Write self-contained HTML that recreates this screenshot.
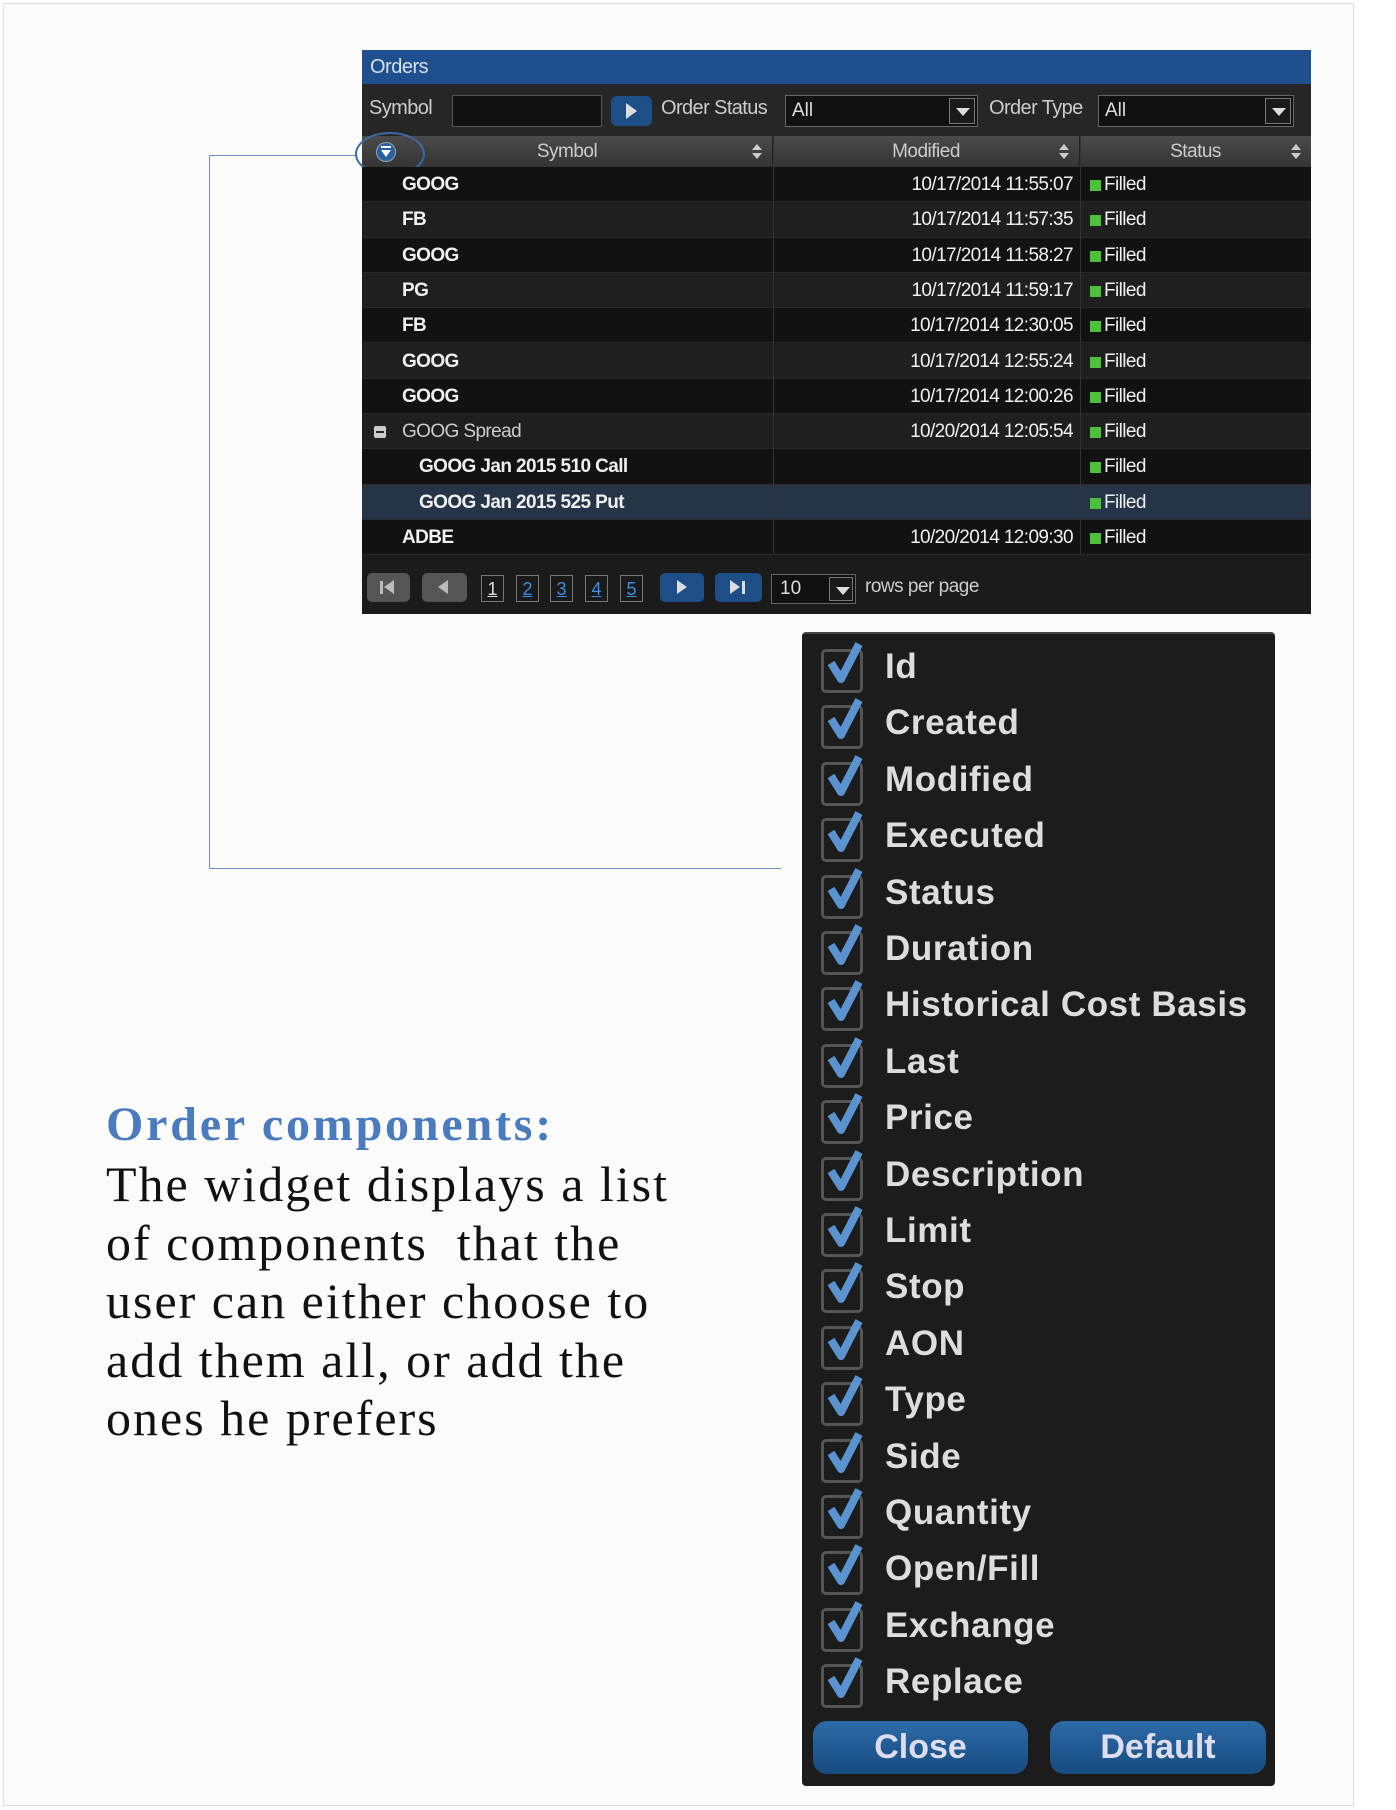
<!DOCTYPE html>
<html><head><meta charset="utf-8"><style>
*{margin:0;padding:0;box-sizing:border-box}
body{width:1396px;height:1810px;background:#fff;position:relative;overflow:hidden;font-family:"Liberation Sans",sans-serif}
.frame{position:absolute;left:3px;top:3px;width:1351px;height:1803px;border:1.5px solid #ddd;background:#fbfbfc}
.abs{position:absolute}
.panel{left:362px;top:50px;width:949px;height:564px;background:#1b1b1b}
.title{left:0;top:0;width:949px;height:34px;background:#1e4f8f;color:#d8e0ea;font-size:20px;line-height:34px;padding-left:8px;letter-spacing:-.5px}
.frow{left:0;top:34px;width:949px;height:52px;background:#262626}
.lbl{color:#ccc;font-size:20px;letter-spacing:-.6px;top:13px}
.inp{background:#111;border:1px solid #555;height:32px;top:11px}
.sel{background:#111;border:1px solid #666;height:32px;top:11px;color:#ddd;font-size:19px;padding:4px 6px}
.dd{position:absolute;right:2px;top:2px;width:26px;height:26px;background:#1a1a1a;border:1px solid #777}
.dd:after{content:"";position:absolute;left:6px;top:9px;border-left:7px solid transparent;border-right:7px solid transparent;border-top:8px solid #ddd}
.btn{background:#1d4f86;border-radius:6px}
.hdr{left:0;top:86px;width:949px;height:31px;background:linear-gradient(#4a4a4a,#353535);color:#ccc;font-size:19px;letter-spacing:-.5px}
.hc{position:absolute;top:0;height:31px;line-height:31px;text-align:center;border-right:1px solid #222}
.srt{position:absolute;right:10px;top:8px;width:10px;height:16px}
.srt:before{content:"";position:absolute;left:0;top:0;border-left:5px solid transparent;border-right:5px solid transparent;border-bottom:6px solid #ccc}
.srt:after{content:"";position:absolute;left:0;top:9px;border-left:5px solid transparent;border-right:5px solid transparent;border-top:6px solid #ccc}
.row{position:absolute;left:0;width:949px;height:35.3px;color:#f0f0f0;font-size:19px;letter-spacing:-.6px;line-height:35px;font-weight:bold;border-bottom:1px solid #2a2a2a}
.row span{position:absolute}
.c1{left:40px}.c2{right:238px;font-weight:normal}.c3{left:728px;font-weight:normal}
.g{display:inline-block;width:11px;height:11px;background:#4cc23c;margin-right:3px;vertical-align:-1px}
.vl{position:absolute;top:86px;width:1px;height:478px;background:#333}
.pb{position:absolute;top:523px;height:29px;border-radius:5px}
.pn{position:absolute;top:525px;width:23px;height:27px;border:1px solid #777;color:#3d8fe6;font-size:18px;text-align:center;line-height:26px;text-decoration:underline;background:#1a1a1a}
.cc{left:802px;top:632px;width:473px;height:1154px;background:#1c1c1c;border-radius:4px;border-top:2px solid #444}
.it{position:absolute;left:19px;height:50px}
.cb{position:absolute;left:0;top:2px;width:42px;height:44px;border:3px solid #555;border-radius:5px}
.it span{position:absolute;left:64px;top:0px;color:#ddd;font-size:35px;font-weight:bold;white-space:nowrap;letter-spacing:.6px}
.bb{position:absolute;top:1087px;height:53px;border-radius:14px;background:linear-gradient(#2c6aa8,#174b80);color:#dde;font-size:34px;font-weight:bold;text-align:center;line-height:52px}
.tx{font-family:"Liberation Serif",serif}
</style></head><body>
<div class="frame"></div>

<div class="abs" style="left:209px;top:155px;width:1px;height:713px;background:#6b8fc0"></div>
<div class="abs" style="left:209px;top:155px;width:146px;height:1px;background:#6b8fc0"></div>
<div class="abs" style="left:209px;top:868px;width:572px;height:1px;background:#6b8fc0"></div>

<div class="abs panel">
  <div class="abs title">Orders</div>
  <div class="abs frow">
    <div class="abs lbl" style="left:7px">Symbol</div>
    <div class="abs inp" style="left:90px;width:150px"></div>
    <div class="abs btn" style="left:249px;top:12px;width:41px;height:30px"><div style="position:absolute;left:15px;top:7px;border-top:8px solid transparent;border-bottom:8px solid transparent;border-left:11px solid #ddd"></div></div>
    <div class="abs lbl" style="left:299px">Order Status</div>
    <div class="abs sel" style="left:423px;width:193px">All<div class="dd"></div></div>
    <div class="abs lbl" style="left:627px">Order Type</div>
    <div class="abs sel" style="left:736px;width:196px">All<div class="dd"></div></div>
  </div>
  <div class="abs hdr">
    <div class="hc" style="left:0;width:411px">Symbol<div class="srt"></div></div>
    <div class="hc" style="left:411px;width:307px">Modified<div class="srt"></div></div>
    <div class="hc" style="left:718px;width:231px;border:none">Status<div class="srt"></div></div>
    <div style="position:absolute;left:14px;top:6px;width:20px;height:20px;border-radius:50%;background:#2c5f9e;border:1px solid #8ab"><div style="position:absolute;left:4px;top:3px;width:10px;height:2px;background:#fff"></div><div style="position:absolute;left:4px;top:7px;border-left:5px solid transparent;border-right:5px solid transparent;border-top:7px solid #fff"></div></div>
  </div>
  <div class="abs" style="left:-7px;top:82px;width:70px;height:44px;border:2.5px solid #3b6aa8;border-radius:50%"></div>

  <div class="row" style="top:117px;background:#121212"><span class="c1">GOOG</span><span class="c2">10/17/2014 11:55:07</span><span class="c3"><i class="g"></i>Filled</span></div>
  <div class="row" style="top:152.3px;background:#1f1f1f"><span class="c1">FB</span><span class="c2">10/17/2014 11:57:35</span><span class="c3"><i class="g"></i>Filled</span></div>
  <div class="row" style="top:187.6px;background:#121212"><span class="c1">GOOG</span><span class="c2">10/17/2014 11:58:27</span><span class="c3"><i class="g"></i>Filled</span></div>
  <div class="row" style="top:222.9px;background:#1f1f1f"><span class="c1">PG</span><span class="c2">10/17/2014 11:59:17</span><span class="c3"><i class="g"></i>Filled</span></div>
  <div class="row" style="top:258.2px;background:#121212"><span class="c1">FB</span><span class="c2">10/17/2014 12:30:05</span><span class="c3"><i class="g"></i>Filled</span></div>
  <div class="row" style="top:293.5px;background:#1f1f1f"><span class="c1">GOOG</span><span class="c2">10/17/2014 12:55:24</span><span class="c3"><i class="g"></i>Filled</span></div>
  <div class="row" style="top:328.8px;background:#121212"><span class="c1">GOOG</span><span class="c2">10/17/2014 12:00:26</span><span class="c3"><i class="g"></i>Filled</span></div>
  <div class="row" style="top:364.1px;background:#1f1f1f"><span style="left:12px;top:12px;width:12px;height:12px;background:#ccc;border-radius:2px"><span style="left:2px;top:5px;width:8px;height:2px;background:#222"></span></span><span class="c1" style="font-weight:normal;color:#ccc">GOOG Spread</span><span class="c2">10/20/2014 12:05:54</span><span class="c3"><i class="g"></i>Filled</span></div>
  <div class="row" style="top:399.4px;background:#121212"><span style="left:57px">GOOG Jan 2015 510 Call</span><span class="c3"><i class="g"></i>Filled</span></div>
  <div class="row" style="top:434.7px;background:#263447"><span style="left:57px">GOOG Jan 2015 525 Put</span><span class="c3"><i class="g"></i>Filled</span></div>
  <div class="row" style="top:470px;background:#121212"><span class="c1">ADBE</span><span class="c2">10/20/2014 12:09:30</span><span class="c3"><i class="g"></i>Filled</span></div>
  <div class="vl" style="left:411px"></div><div class="vl" style="left:718px"></div>
  <div class="abs" style="left:0;top:505px;width:949px;height:59px;background:#1b1b1b"></div>

  <div class="pb" style="left:5px;width:43px;background:#555"><div style="position:absolute;left:13px;top:8px;width:3px;height:13px;background:#bbb"></div><div style="position:absolute;left:17px;top:7px;border-top:7px solid transparent;border-bottom:7px solid transparent;border-right:10px solid #bbb"></div></div>
  <div class="pb" style="left:60px;width:45px;background:#555"><div style="position:absolute;left:16px;top:7px;border-top:7px solid transparent;border-bottom:7px solid transparent;border-right:10px solid #bbb"></div></div>
  <div class="pn" style="left:119px;color:#ddd">1</div>
  <div class="pn" style="left:154px">2</div>
  <div class="pn" style="left:188px">3</div>
  <div class="pn" style="left:223px">4</div>
  <div class="pn" style="left:258px">5</div>
  <div class="pb" style="left:298px;width:44px;background:#1d4f86"><div style="position:absolute;left:17px;top:7px;border-top:7px solid transparent;border-bottom:7px solid transparent;border-left:10px solid #ddd"></div></div>
  <div class="pb" style="left:353px;width:47px;background:#1d4f86"><div style="position:absolute;left:15px;top:7px;border-top:7px solid transparent;border-bottom:7px solid transparent;border-left:10px solid #ddd"></div><div style="position:absolute;left:27px;top:8px;width:3px;height:13px;background:#ddd"></div></div>
  <div class="abs sel" style="left:409px;top:524px;width:85px;height:30px;padding:3px 8px">10<div class="dd" style="height:24px;width:24px"></div></div>
  <div class="abs" style="left:503px;top:526px;color:#ccc;font-size:19px;letter-spacing:-.5px">rows per page</div>
</div>

<div class="abs cc">
  <div class="it" style="top:13px"><div class="cb"></div><svg class="abs" style="left:4px;top:-6px" width="42" height="48" viewBox="0 0 42 48"><path d="M6 22 L16 38 L34 3" fill="none" stroke="#5a93cf" stroke-width="8" stroke-linejoin="round"/></svg><span>Id</span></div>
  <div class="it" style="top:69.4px"><div class="cb"></div><svg class="abs" style="left:4px;top:-6px" width="42" height="48" viewBox="0 0 42 48"><path d="M6 22 L16 38 L34 3" fill="none" stroke="#5a93cf" stroke-width="8" stroke-linejoin="round"/></svg><span>Created</span></div>
  <div class="it" style="top:125.8px"><div class="cb"></div><svg class="abs" style="left:4px;top:-6px" width="42" height="48" viewBox="0 0 42 48"><path d="M6 22 L16 38 L34 3" fill="none" stroke="#5a93cf" stroke-width="8" stroke-linejoin="round"/></svg><span>Modified</span></div>
  <div class="it" style="top:182.2px"><div class="cb"></div><svg class="abs" style="left:4px;top:-6px" width="42" height="48" viewBox="0 0 42 48"><path d="M6 22 L16 38 L34 3" fill="none" stroke="#5a93cf" stroke-width="8" stroke-linejoin="round"/></svg><span>Executed</span></div>
  <div class="it" style="top:238.6px"><div class="cb"></div><svg class="abs" style="left:4px;top:-6px" width="42" height="48" viewBox="0 0 42 48"><path d="M6 22 L16 38 L34 3" fill="none" stroke="#5a93cf" stroke-width="8" stroke-linejoin="round"/></svg><span>Status</span></div>
  <div class="it" style="top:295px"><div class="cb"></div><svg class="abs" style="left:4px;top:-6px" width="42" height="48" viewBox="0 0 42 48"><path d="M6 22 L16 38 L34 3" fill="none" stroke="#5a93cf" stroke-width="8" stroke-linejoin="round"/></svg><span>Duration</span></div>
  <div class="it" style="top:351.4px"><div class="cb"></div><svg class="abs" style="left:4px;top:-6px" width="42" height="48" viewBox="0 0 42 48"><path d="M6 22 L16 38 L34 3" fill="none" stroke="#5a93cf" stroke-width="8" stroke-linejoin="round"/></svg><span>Historical Cost Basis</span></div>
  <div class="it" style="top:407.8px"><div class="cb"></div><svg class="abs" style="left:4px;top:-6px" width="42" height="48" viewBox="0 0 42 48"><path d="M6 22 L16 38 L34 3" fill="none" stroke="#5a93cf" stroke-width="8" stroke-linejoin="round"/></svg><span>Last</span></div>
  <div class="it" style="top:464.2px"><div class="cb"></div><svg class="abs" style="left:4px;top:-6px" width="42" height="48" viewBox="0 0 42 48"><path d="M6 22 L16 38 L34 3" fill="none" stroke="#5a93cf" stroke-width="8" stroke-linejoin="round"/></svg><span>Price</span></div>
  <div class="it" style="top:520.6px"><div class="cb"></div><svg class="abs" style="left:4px;top:-6px" width="42" height="48" viewBox="0 0 42 48"><path d="M6 22 L16 38 L34 3" fill="none" stroke="#5a93cf" stroke-width="8" stroke-linejoin="round"/></svg><span>Description</span></div>
  <div class="it" style="top:577px"><div class="cb"></div><svg class="abs" style="left:4px;top:-6px" width="42" height="48" viewBox="0 0 42 48"><path d="M6 22 L16 38 L34 3" fill="none" stroke="#5a93cf" stroke-width="8" stroke-linejoin="round"/></svg><span>Limit</span></div>
  <div class="it" style="top:633.4px"><div class="cb"></div><svg class="abs" style="left:4px;top:-6px" width="42" height="48" viewBox="0 0 42 48"><path d="M6 22 L16 38 L34 3" fill="none" stroke="#5a93cf" stroke-width="8" stroke-linejoin="round"/></svg><span>Stop</span></div>
  <div class="it" style="top:689.8px"><div class="cb"></div><svg class="abs" style="left:4px;top:-6px" width="42" height="48" viewBox="0 0 42 48"><path d="M6 22 L16 38 L34 3" fill="none" stroke="#5a93cf" stroke-width="8" stroke-linejoin="round"/></svg><span>AON</span></div>
  <div class="it" style="top:746.2px"><div class="cb"></div><svg class="abs" style="left:4px;top:-6px" width="42" height="48" viewBox="0 0 42 48"><path d="M6 22 L16 38 L34 3" fill="none" stroke="#5a93cf" stroke-width="8" stroke-linejoin="round"/></svg><span>Type</span></div>
  <div class="it" style="top:802.6px"><div class="cb"></div><svg class="abs" style="left:4px;top:-6px" width="42" height="48" viewBox="0 0 42 48"><path d="M6 22 L16 38 L34 3" fill="none" stroke="#5a93cf" stroke-width="8" stroke-linejoin="round"/></svg><span>Side</span></div>
  <div class="it" style="top:859px"><div class="cb"></div><svg class="abs" style="left:4px;top:-6px" width="42" height="48" viewBox="0 0 42 48"><path d="M6 22 L16 38 L34 3" fill="none" stroke="#5a93cf" stroke-width="8" stroke-linejoin="round"/></svg><span>Quantity</span></div>
  <div class="it" style="top:915.4px"><div class="cb"></div><svg class="abs" style="left:4px;top:-6px" width="42" height="48" viewBox="0 0 42 48"><path d="M6 22 L16 38 L34 3" fill="none" stroke="#5a93cf" stroke-width="8" stroke-linejoin="round"/></svg><span>Open/Fill</span></div>
  <div class="it" style="top:971.8px"><div class="cb"></div><svg class="abs" style="left:4px;top:-6px" width="42" height="48" viewBox="0 0 42 48"><path d="M6 22 L16 38 L34 3" fill="none" stroke="#5a93cf" stroke-width="8" stroke-linejoin="round"/></svg><span>Exchange</span></div>
  <div class="it" style="top:1028.2px"><div class="cb"></div><svg class="abs" style="left:4px;top:-6px" width="42" height="48" viewBox="0 0 42 48"><path d="M6 22 L16 38 L34 3" fill="none" stroke="#5a93cf" stroke-width="8" stroke-linejoin="round"/></svg><span>Replace</span></div>
  <div class="bb" style="left:11px;width:215px">Close</div>
  <div class="bb" style="left:248px;width:216px">Default</div>
</div>

<div class="abs tx" style="left:106px;top:1097px;color:#4a7bbf;font-size:48px;font-weight:bold;letter-spacing:2.8px">Order components:</div>
<div class="abs tx" style="left:106px;top:1155px;color:#111;font-size:50px;line-height:58.5px;letter-spacing:2px;white-space:pre">The widget displays a list
of components  that the
user can either choose to
add them all, or add the
ones he prefers</div>
</body></html>
